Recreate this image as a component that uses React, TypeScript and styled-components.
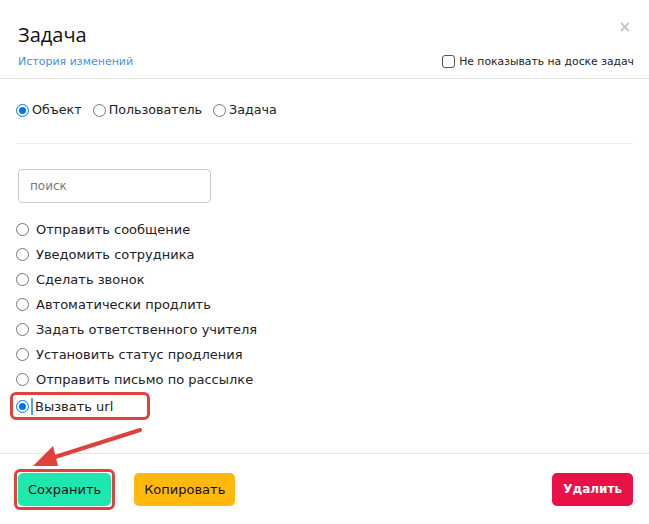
import React from "react";
import styled, { createGlobalStyle } from "styled-components";

const Global = createGlobalStyle`
  html, body { margin: 0; padding: 0; background: #fff; }
  body { width: 649px; height: 524px; overflow: hidden; }
  * { box-sizing: border-box; }
`;

const Modal = styled.div`
  position: relative;
  width: 649px;
  height: 524px;
  background: #fff;
  display: flex;
  flex-direction: column;
  font-family: "DejaVu Sans", sans-serif;
  color: #222;
`;

const Header = styled.div`
  position: relative;
  padding: 22px 16px 0 16px;
  height: 79px;
  border-bottom: 1px solid #e5e5e5;
`;

const Title = styled.h1`
  margin: 0 0 0 2px;
  font-family: "Open Sans", sans-serif;
  font-weight: 400;
  font-size: 20px;
  line-height: 26px;
  color: #111;
`;

const Close = styled.span`
  position: absolute;
  right: 18px;
  top: 18px;
  font-family: "DejaVu Sans", sans-serif;
  font-size: 15px;
  font-weight: 700;
  color: #c4c4c4;
`;

const SubRow = styled.div`
  display: flex;
  justify-content: space-between;
  align-items: center;
  margin-top: 7px;
  padding-left: 2px;
`;

const Link = styled.a`
  font-family: "DejaVu Sans", sans-serif;
  font-size: 11px;
  color: #4a8fdf;
  text-decoration: none;
`;

const CheckLabel = styled.label`
  display: flex;
  align-items: center;
  gap: 4px;
  font-family: "DejaVu Sans", sans-serif;
  font-size: 10.8px;
  color: #222;
  margin-right: -1px;
`;

const CheckBox = styled.span`
  width: 13px;
  height: 13px;
  border: 1px solid #555;
  border-radius: 3px;
  display: inline-block;
`;

const Body = styled.div`
  flex: 1;
  padding: 0 16px;
`;

const TypeRow = styled.div`
  display: flex;
  align-items: center;
  height: 65px;
  padding-bottom: 2px;
  gap: 11px;
  border-bottom: 1px solid #eee;
`;

const RadioLabel = styled.label`
  display: flex;
  align-items: center;
  gap: 3px;
  font-size: 12.7px;
  line-height: 16px;
`;

const RadioDot = styled.span<{ $checked?: boolean }>`
  width: 13px;
  height: 13px;
  border-radius: 50%;
  flex: none;
  border: 1px solid ${(p) => (p.$checked ? "#0075ff" : "#767676")};
  display: inline-flex;
  align-items: center;
  justify-content: center;
  background: #fff;
  &::after {
    content: "";
    display: ${(p) => (p.$checked ? "block" : "none")};
    width: 7px;
    height: 7px;
    border-radius: 50%;
    background: #0075ff;
  }
`;

const Search = styled.input`
  display: block;
  margin: 25px 0 0 2px;
  width: 193px;
  height: 34px;
  border: 1px solid #c8c8c8;
  border-radius: 4px;
  padding: 0 11px;
  font-family: "DejaVu Sans", sans-serif;
  font-size: 12px;
  color: #222;
  &::placeholder { color: #777; }
`;

const List = styled.div`
  margin-top: 14px;
  display: flex;
  flex-direction: column;
`;

const Item = styled.label`
  display: flex;
  align-items: center;
  gap: 7px;
  height: 25px;
  font-size: 13px;
  color: #222;
`;

const Highlight = styled.div`
  position: relative;
  margin-left: -6px;
  width: 140px;
  height: 28px;
  border: 3px solid #e0413a;
  border-radius: 6px;
  display: flex;
  align-items: center;
  padding-left: 3px;
  gap: 2px;
  font-size: 13px;
`;

const Caret = styled.span`
  width: 2px;
  height: 17px;
  background: #4fa3e6;
`;

const Footer = styled.div`
  height: 71px;
  border-top: 1px solid #e5e5e5;
  display: flex;
  align-items: center;
  padding: 0 16px 0 14px;
  gap: 19px;
`;

const Mark = styled.div`
  border: 3px solid #e0413a;
  border-radius: 6px;
  padding: 1px;
  display: flex;
`;

const Button = styled.button<{ $bg: string; $fg: string; $bold?: boolean }>`
  height: 33px;
  border: none;
  border-radius: 5px;
  padding: 0 ${(p) => (p.$bold ? 11 : 10)}px;
  background: ${(p) => p.$bg};
  color: ${(p) => p.$fg};
  font-family: "DejaVu Sans", sans-serif;
  font-size: ${(p) => (p.$bold ? 12 : 13)}px;
  font-weight: ${(p) => (p.$bold ? 700 : 400)};
`;

const Spacer = styled.div`
  flex: 1;
`;

const ArrowSvg = styled.svg`
  position: absolute;
  left: 0;
  top: 0;
  pointer-events: none;
`;

const items = [
  "Отправить сообщение",
  "Уведомить сотрудника",
  "Сделать звонок",
  "Автоматически продлить",
  "Задать ответственного учителя",
  "Установить статус продления",
  "Отправить письмо по рассылке",
];

export default function App() {
  return (
    <>
      <Global />
      <Modal>
        <Header>
          <Title>Задача</Title>
          <Close>×</Close>
          <SubRow>
            <Link>История изменений</Link>
            <CheckLabel>
              <CheckBox />
              Не показывать на доске задач
            </CheckLabel>
          </SubRow>
        </Header>
        <Body>
          <TypeRow>
            <RadioLabel><RadioDot $checked />Объект</RadioLabel>
            <RadioLabel><RadioDot />Пользователь</RadioLabel>
            <RadioLabel><RadioDot />Задача</RadioLabel>
          </TypeRow>
          <Search placeholder="поиск" />
          <List>
            {items.map((t) => (
              <Item key={t}>
                <RadioDot />
                {t}
              </Item>
            ))}
            <Highlight>
              <RadioDot $checked />
              <Caret />
              Вызвать url
            </Highlight>
          </List>
        </Body>
        <Footer>
          <Mark>
            <Button $bg="#1ee8b0" $fg="#111">Сохранить</Button>
          </Mark>
          <Button $bg="#ffb80b" $fg="#111">Копировать</Button>
          <Spacer />
          <Button $bg="#ea1148" $fg="#fff" $bold>Удалить</Button>
        </Footer>
        <ArrowSvg width="649" height="524" viewBox="0 0 649 524">
          <line x1="140" y1="430" x2="52" y2="458" stroke="#e0413a" strokeWidth="4" strokeLinecap="round" />
          <polygon points="33,466 53,446 58,466" fill="#e0413a" />
        </ArrowSvg>
      </Modal>
    </>
  );
}
